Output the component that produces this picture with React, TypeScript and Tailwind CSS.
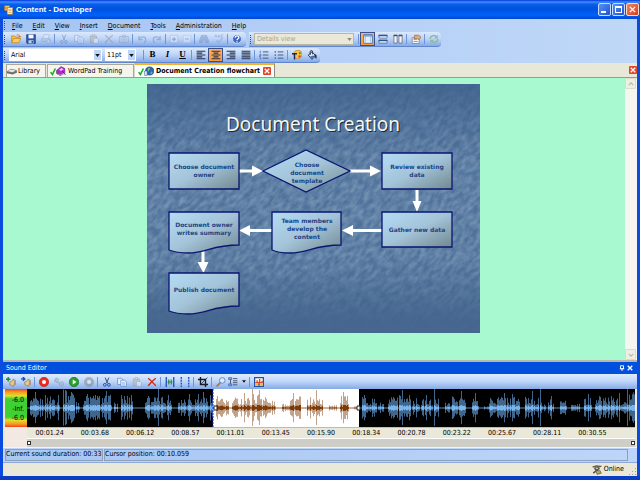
import type { ReactNode } from "react";
import { clsx } from "clsx";

type IconProps = { children: ReactNode; faded?: boolean };

const Icon = ({ children, faded }: IconProps) => (
  <svg viewBox="0 0 16 16" className={clsx("h-[10px] w-[10px] shrink-0", faded && "opacity-50")} fill="none" aria-hidden="true">
    {children}
  </svg>
);

const OpenIcon = () => (
  <Icon>
    <path d="M1 14V3h5l2 2h5v3" fill="#f6c34a" stroke="#b57a1c" />
    <path d="M1 14 4 7h12l-4 7z" fill="#ffc965" stroke="#b57a1c" />
    <path d="M9 2c3-2 5 0 5 3M12 3l2 2 2-2" stroke="#d8742a" strokeWidth="1.4" />
  </Icon>
);

const SaveIcon = () => (
  <Icon>
    <path d="M1 1h14v14H2l-1-1z" fill="#2c55a8" stroke="#173474" />
    <path d="M4 1h8v6H4z" fill="#f5f7fb" />
    <path d="M4 10h8v5H4z" fill="#c3cfe6" />
    <path d="M9 11h2v3H9z" fill="#173474" />
  </Icon>
);

const PrintIcon = () => (
  <Icon faded>
    <path d="M3 7 5 1h8l-1 6" fill="#e8effa" stroke="#7791be" />
    <path d="M1 7h13l1 5H2z" fill="#aebfdd" stroke="#7791be" />
    <circle cx="12" cy="12" r="3" fill="#c4d3ec" stroke="#7791be" />
  </Icon>
);

const CutIcon = ({ faded }: { faded?: boolean }) => (
  <Icon faded={faded}>
    <path d="M5 1 9 10M11 1 7 10" stroke={faded ? "#5d7cae" : "#34527f"} strokeWidth="1.6" />
    <circle cx="4.5" cy="12.5" r="2.2" stroke={faded ? "#5d7cae" : "#1d50b8"} strokeWidth="1.6" />
    <circle cx="11" cy="12.5" r="2.2" stroke={faded ? "#5d7cae" : "#1d50b8"} strokeWidth="1.6" />
  </Icon>
);

const CopyIcon = ({ faded }: { faded?: boolean }) => (
  <Icon faded={faded}>
    <path d="M1 2h6l3 3v7H1z" fill="#eaf2ff" stroke="#5079bd" />
    <path d="M6 5h6l3 3v7H6z" fill="#eaf2ff" stroke="#5079bd" />
    <path d="M8 9h4M8 11h5M8 13h5" stroke="#7fa0d6" />
  </Icon>
);

const PasteIcon = () => (
  <Icon faded>
    <path d="M2 3h10v11H2z" fill="#b9b3a3" stroke="#7e7c78" />
    <path d="M5 1h4v3H5z" fill="#d9d9d9" stroke="#7e7c78" />
    <path d="M7 7h6l2 2v6H7z" fill="#f2f2f2" stroke="#7e8ba5" />
  </Icon>
);

const DeleteIcon = ({ faded }: { faded?: boolean }) => (
  <Icon faded={faded}>
    <path d="M2 2c4 3 8 8 12 12M14 2C10 5 5 10 2 14" stroke={faded ? "#8b8f96" : "#d5230c"} strokeWidth="2.2" />
  </Icon>
);

const CameraIcon = () => (
  <Icon faded>
    <path d="M1 4h14v10H1z" fill="#c1cbdf" stroke="#6680ac" />
    <path d="M5 4V2h6v2" stroke="#6680ac" />
    <circle cx="8" cy="9" r="3.5" fill="#e7edf8" stroke="#6680ac" />
    <path d="M6 9h4M8 7v4" stroke="#6680ac" />
  </Icon>
);

const UndoIcon = () => (
  <Icon faded>
    <path d="M3 3v6h6M3 9c3-6 11-6 11 0 0 2-1 4-3 5" stroke="#6a8bc4" strokeWidth="2" />
  </Icon>
);

const RedoIcon = () => (
  <Icon faded>
    <path d="M13 3v6H7M13 9C10 3 2 3 2 9c0 2 1 4 3 5" stroke="#6a8bc4" strokeWidth="2" />
  </Icon>
);

const ExpandIcon = () => (
  <Icon faded>
    <path d="M2 2h12v12H2z" fill="#e4edfb" stroke="#7f9acb" />
    <path d="M5 8h6M8 5v6" stroke="#5577b3" strokeWidth="2" />
  </Icon>
);

const CollapseIcon = () => (
  <Icon faded>
    <path d="M2 2h12v12H2z" fill="#dfe9fa" stroke="#9db3da" />
    <path d="M5 8h6" stroke="#7f9acb" strokeWidth="2" />
  </Icon>
);

const FindIcon = () => (
  <Icon faded>
    <path d="M4 2h3v5h2V2h3l3 8v4h-5v-4H6v4H1v-4z" fill="#7d97c5" stroke="#5e7cb2" />
  </Icon>
);

const SpellIcon = () => (
  <Icon faded>
    <path d="M1 5 3 1l2 4M2 4h3M7 1v4h3V3H7M15 1h-3v4h3" stroke="#6583b8" />
    <path d="M4 10l3 4 7-8" stroke="#8aa2cd" strokeWidth="2.2" />
  </Icon>
);

const HelpIcon = () => (
  <Icon>
    <circle cx="8" cy="8" r="7" fill="#3a67c4" stroke="#e9f1ff" />
    <path d="M5 6c0-4 6-4 6-.5C11 8 8 7.500 8 10" stroke="#fff" strokeWidth="2" />
    <path d="M7 11.500h2v2H7z" fill="#fff" />
  </Icon>
);

const SingleViewIcon = () => (
  <Icon>
    <path d="M1 1h14v14H1z" fill="#e4effd" stroke="#4f79b8" strokeWidth="1.500" />
    <path d="M1 3h14" stroke="#5b8bd0" strokeWidth="2" />
    <path d="M4 4v10M12 4v10" stroke="#8fb1e0" strokeWidth="1.500" strokeDasharray="2 1" />
  </Icon>
);

const RowsViewIcon = () => (
  <Icon>
    <path d="M1.500 1.500h13v5h-13zM1.500 9.500h13v5h-13z" fill="#f2f7ff" stroke="#31558f" />
    <path d="M1 2.500h14M1 10.500h14" stroke="#31558f" strokeWidth="2" />
  </Icon>
);

const ColumnsViewIcon = () => (
  <Icon>
    <path d="M1.500 1.500h5v13h-5zM9.500 1.500h5v13h-5z" fill="#f2f7ff" stroke="#4a4f5c" />
    <path d="M1 2.500h6M9 2.500h6" stroke="#4a4f5c" strokeWidth="2" />
  </Icon>
);

const PropertiesIcon = () => (
  <Icon>
    <path d="M2 6h11v9H2z" fill="#fff" stroke="#51699b" />
    <path d="M4 9h6M4 12h7" stroke="#51699b" />
    <path d="M6 2h6l4 3-3 4-4-2-4 1z" fill="#e0b072" stroke="#8b5a2d" />
  </Icon>
);

const RefreshIcon = () => (
  <Icon>
    <path d="M2 8c0-6 8-7 10-3M14 8c0 6-8 7-10 3" stroke="#8fb9a9" strokeWidth="2.400" />
    <path d="M14 1v6H8zM2 15V9h6z" fill="#8fb9a9" />
  </Icon>
);

const AlignIcon = ({ lines }: { lines: string }) => (
  <Icon>
    <path d={lines} stroke="#27344f" strokeWidth="1.700" />
  </Icon>
);

const NumberListIcon = () => (
  <Icon>
    <path d="M2 1v4M1 7h2v2H1v2h2M1 13h2v2" stroke="#224f9d" />
    <path d="M6 3h9M6 8h9M6 13h9" stroke="#3c4d6f" strokeWidth="1.400" />
  </Icon>
);

const BulletListIcon = () => (
  <Icon>
    <path d="M1 2h2v2H1zM1 7h2v2H1zM1 12h2v2H1z" fill="#224f9d" />
    <path d="M6 3h9M6 8h9M6 13h9" stroke="#3c4d6f" strokeWidth="1.400" />
  </Icon>
);

const FontColorIcon = () => (
  <Icon>
    <circle cx="9.500" cy="7" r="6.500" fill="#ffc13d" stroke="#b97a21" />
    <circle cx="12.500" cy="5" r="1.800" fill="#32a843" />
    <circle cx="12" cy="10" r="1.800" fill="#ce2d29" />
    <path d="M0 6h8M4 6v9" stroke="#162b50" strokeWidth="2.200" />
  </Icon>
);

const FillIcon = () => (
  <Icon>
    <path d="M2 8 8 3l6 6-6 6z" fill="#e8edf6" stroke="#1d2a44" strokeWidth="1.400" />
    <path d="M8 9 14 9l-6 6-4-4z" fill="#4f6ea8" />
    <path d="M5 8V3c0-3 4-3 4 0v4" stroke="#1d2a44" strokeWidth="1.400" />
    <path d="M12 6c3 1 4 4 3 8-2-1-2-3-3-5z" fill="#1d2a44" />
  </Icon>
);

const SpeakerIcon = ({ minus }: { minus?: boolean }) => (
  <Icon>
    <path d="M6 8l3-1 3-4c2 3 2 8 0 12l-4-2-2-1z" fill="#e9c98c" stroke="#906b38" />
    <path d="M14 4c2 3 2 6 0 9" stroke="#906b38" />
    <path d={minus ? "M0 3h6M3 0l3 3-3 3" : "M0 3.500h7M3.500 0v7"} stroke={minus ? "#174eb5" : "#178b25"} strokeWidth="2.200" />
  </Icon>
);

const RecordIcon = () => (
  <Icon>
    <circle cx="8" cy="8" r="7.500" fill="#ee2b1a" stroke="#c41d10" />
    <circle cx="8" cy="8" r="3.200" fill="#fff" />
  </Icon>
);

const MicIcon = () => (
  <Icon faded>
    <path d="M2 3c3-3 6 0 5 3L5 9 1 7zM6 8l5 4" fill="#a7adb8" stroke="#747e90" strokeWidth="1.500" />
    <circle cx="12" cy="11" r="3.500" fill="#aab0bb" stroke="#747e90" />
  </Icon>
);

const PlayIcon = () => (
  <Icon>
    <circle cx="8" cy="8" r="7.500" fill="#26a12c" stroke="#116919" />
    <path d="M6 4v8l6-4z" fill="#fff" />
  </Icon>
);

const StopIcon = () => (
  <Icon faded>
    <circle cx="8" cy="8" r="7.500" fill="#80858d" stroke="#747e90" />
    <circle cx="8" cy="8" r="3.200" fill="#f3f6fb" />
  </Icon>
);

const SilenceIcon = () => (
  <Icon>
    <path d="M2 0v16M14 0v16" stroke="#1746c5" strokeWidth="2" />
    <path d="M4 8h8M6 4v8M10 4v8" stroke="#218a3a" strokeWidth="1.800" />
  </Icon>
);

const MarkersIcon = () => (
  <Icon>
    <path d="M2 0v16M14 0v16" stroke="#1746c5" strokeWidth="2" strokeDasharray="3 1.500" />
  </Icon>
);

const CropIcon = () => (
  <Icon>
    <path d="M4 0v12h12M0 4h12v12" stroke="#181c25" strokeWidth="2.200" />
    <path d="M5 11 15 1" stroke="#181c25" strokeWidth="1.200" />
  </Icon>
);

const ZoomIcon = () => (
  <Icon>
    <path d="M7 9 1 15" stroke="#c6702b" strokeWidth="3" />
    <circle cx="10" cy="5.500" r="4.500" fill="#d6ebff" stroke="#6985b5" strokeWidth="1.500" />
  </Icon>
);

const TreeIcon = () => (
  <Icon>
    <path d="M1 1h5v3H1zM1 11h5v3H1z" fill="#77a9ed" stroke="#2a5db0" />
    <path d="M8 2.500h7M8 6h7M8 9h7M8 12.500h7M4 4v7" stroke="#4b5568" strokeWidth="1.500" />
  </Icon>
);

const LevelsIcon = () => (
  <Icon>
    <path d="M1 1h14v14H1z" fill="#fff6e5" stroke="#2353a3" strokeWidth="2" />
    <path d="M2 10V8h2V5h2v3h2V3h2v5h2V6h2v4z" fill="#e0432a" />
    <path d="M2 10h12v4H2z" fill="#f6b83c" />
    <path d="M7 10h2v4H7z" fill="#2353a3" />
  </Icon>
);

const DriveIcon = () => (
  <Icon>
    <path d="M0 9 6 5l9 2 1 3-7 3-9-2z" fill="#6f7278" stroke="#53565c" strokeWidth="0.800" />
    <path d="M1 8.500 6 5.500l8 1.500-5 3z" fill="#e6e6e6" />
  </Icon>
);

const CheckIcon = () => (
  <svg viewBox="0 0 10 14" className="h-[9px] w-[6px]" fill="none" aria-hidden="true">
    <path d="M1 8l3 4L9 2" stroke="#15b01c" strokeWidth="2.600" />
  </svg>
);

const BookIcon = () => (
  <Icon>
    <path d="M1 7 8 1l6 3v7l-7 4-6-3z" fill="#b12bc9" stroke="#5f1878" />
    <path d="M5 6l4-3 3 2-4 3z" fill="#f3cdf8" />
    <path d="M2 12l5 2 7-4v2l-7 3-5-2z" fill="#fff" stroke="#5f1878" strokeWidth="0.500" />
    <path d="M10 8l5 6" stroke="#28386f" strokeWidth="1.600" />
  </Icon>
);

const GlobeIcon = () => (
  <Icon>
    <circle cx="9" cy="8" r="6.500" fill="#2a62bd" stroke="#12346f" />
    <path d="M6 4c3-3 5 0 3 2s0 3-3 2zM11 9c3-1 3 1 2 3l-3 1z" fill="#6cc077" />
    <path d="M1 8h4v7H1z" fill="#e9f2ff" stroke="#426399" />
  </Icon>
);

const AppIcon = () => (
  <Icon>
    <path d="M1 1h8v8H1z" fill="#f5d987" stroke="#93651f" />
    <path d="M5 4h9v11H5z" fill="#fff5d3" stroke="#93651f" />
    <path d="M7 7h5M7 9h5M7 12h5" stroke="#d98f28" />
    <path d="M1 3h5v4H1z" fill="#e6902b" />
  </Icon>
);

const OnlineIcon = () => (
  <Icon>
    <path d="M1 3l9 1 5-2-8-1z" fill="#77756f" stroke="#3c3c39" />
    <path d="M2 13l10-8M4 5l9 9" stroke="#57544b" strokeWidth="2.500" />
    <path d="M6 9h7l2 4-7 2z" fill="#c5a44d" stroke="#57544b" />
  </Icon>
);

const Grip = () => (
  <span className="mx-px flex h-full w-[3px] flex-col justify-center gap-px" aria-hidden="true">
    <span className="h-px w-px bg-[#1f4d9f]" />
    <span className="h-px w-px bg-[#1f4d9f]" />
    <span className="h-px w-px bg-[#1f4d9f]" />
    <span className="h-px w-px bg-[#1f4d9f]" />
    <span className="h-px w-px bg-[#1f4d9f]" />
  </span>
);

const Separator = () => <span className="mx-px h-[10px] w-px shrink-0 bg-[#6c94d6]" aria-hidden="true" />;

type ToolButtonProps = { label: string; children: ReactNode; active?: boolean; narrow?: boolean; disabled?: boolean };

const ToolButton = ({ label, children, active, narrow, disabled }: ToolButtonProps) => (
  <button
    type="button"
    aria-label={label}
    disabled={disabled}
    className={clsx(
      "flex h-[14px] shrink-0 items-center justify-center",
      narrow ? "w-[13px]" : "w-[15px]",
      active && "border border-[#3d4f86] bg-gradient-to-b from-[#ffb062] to-[#f79a3c]"
    )}
  >
    {children}
  </button>
);

const toolbarClass =
  "flex h-[15px] items-center rounded-r-sm border-b border-[#5f87cf] bg-gradient-to-b from-[#dce9fd] via-[#bcd3f7] to-[#86aae6]";

type ToolbarSelectProps = { label: string; value: string; disabled?: boolean; className: string };

const ToolbarSelect = ({ label, value, disabled, className }: ToolbarSelectProps) => (
  <div className={clsx("relative h-[12px] shrink-0", className)}>
    <select
      aria-label={label}
      defaultValue={value}
      disabled={disabled}
      className={clsx(
        "block h-full w-full appearance-none px-[2px] text-[7px] leading-[10px] opacity-100",
        disabled ? "border border-[#b9b7a3] bg-[#e9e8d9] text-[#a4a294]" : "bg-white text-black"
      )}
    >
      <option>{value}</option>
    </select>
    <span
      className={clsx(
        "pointer-events-none absolute inset-y-px right-px flex w-[7px] items-center justify-center",
        !disabled && "bg-[#bfd5f8]"
      )}
    >
      <svg viewBox="0 0 6 4" className="h-[3px] w-[5px]" aria-hidden="true">
        <path d="M0 0h6L3 4z" fill={disabled ? "#8c8a7c" : "#111"} />
      </svg>
    </span>
  </div>
);

const TitleBar = () => (
  <header className="flex h-[19px] shrink-0 items-center bg-[linear-gradient(to_bottom,#0831d9_0,#3a93ff_2px,#0a5fee_4px,#0050dd_9px,#0062fb_15px,#0046d0_19px)] pr-px pl-[4px]">
    <AppIcon />
    <h1 className="ml-[2px] flex-1 font-['Liberation_Sans',sans-serif] text-[8px] leading-[12px] font-bold text-white">
      Content - Developer
    </h1>
    <div className="flex gap-px">
      <button type="button" aria-label="Minimize" className="flex h-[13px] w-[13px] rounded-[2px] border border-[#c7dcff] bg-gradient-to-br from-[#5a92f5] to-[#1e50d3]">
        <span className="mt-[7px] ml-[2px] h-[2px] w-[5px] bg-white" />
      </button>
      <button type="button" aria-label="Maximize" className="flex h-[13px] w-[13px] items-center justify-center rounded-[2px] border border-[#c7dcff] bg-gradient-to-br from-[#5a92f5] to-[#1e50d3]">
        <span className="h-[7px] w-[7px] border border-t-2 border-white" />
      </button>
      <button type="button" aria-label="Close" className="flex h-[13px] w-[13px] items-center justify-center rounded-[2px] border border-[#ffd9cc] bg-gradient-to-br from-[#f08563] to-[#d33a10]">
        <svg viewBox="0 0 8 8" className="h-[7px] w-[7px]" aria-hidden="true">
          <path d="M1 1l6 6M7 1 1 7" stroke="#fff" strokeWidth="1.500" />
        </svg>
      </button>
    </div>
  </header>
);

const menuItems = ["File", "Edit", "View", "Insert", "Document", "Tools", "Administration", "Help"];

const MenuBar = () => (
  <nav className="flex h-[13px] items-center">
    <Grip />
    <div className="ml-[4px] flex gap-[10px]">
      {menuItems.map((item) => (
        <button key={item} type="button" className="text-[7px] leading-[10px]">
          <span className="underline">{item[0]}</span>
          {item.slice(1)}
        </button>
      ))}
    </div>
  </nav>
);

const StandardToolbar = () => (
  <div className="flex">
    <div className={clsx(toolbarClass, "pr-[2px]")}>
      <Grip />
      <ToolButton label="Open"><OpenIcon /></ToolButton>
      <ToolButton label="Save"><SaveIcon /></ToolButton>
      <ToolButton label="Print" disabled><PrintIcon /></ToolButton>
      <Separator />
      <ToolButton label="Cut" disabled><CutIcon faded /></ToolButton>
      <ToolButton label="Copy" disabled><CopyIcon faded /></ToolButton>
      <ToolButton label="Paste" disabled><PasteIcon /></ToolButton>
      <ToolButton label="Delete" disabled><DeleteIcon faded /></ToolButton>
      <ToolButton label="Capture" disabled><CameraIcon /></ToolButton>
      <Separator />
      <ToolButton label="Undo" disabled><UndoIcon /></ToolButton>
      <ToolButton label="Redo" disabled><RedoIcon /></ToolButton>
      <Separator />
      <ToolButton label="Expand" narrow disabled><ExpandIcon /></ToolButton>
      <ToolButton label="Collapse" narrow disabled><CollapseIcon /></ToolButton>
      <Separator />
      <ToolButton label="Find" disabled><FindIcon /></ToolButton>
      <ToolButton label="Check spelling" disabled><SpellIcon /></ToolButton>
      <Separator />
      <ToolButton label="Help"><HelpIcon /></ToolButton>
    </div>
    <div className={clsx(toolbarClass, "ml-[3px]")}>
      <Grip />
      <ToolbarSelect label="View" value="Details view" disabled className="w-[100px]" />
      <span className="w-[3px]" />
      <Separator />
      <ToolButton label="Single pane" active><SingleViewIcon /></ToolButton>
      <ToolButton label="Split rows"><RowsViewIcon /></ToolButton>
      <ToolButton label="Split columns"><ColumnsViewIcon /></ToolButton>
      <Separator />
      <ToolButton label="Properties"><PropertiesIcon /></ToolButton>
      <Separator />
      <ToolButton label="Refresh"><RefreshIcon /></ToolButton>
    </div>
  </div>
);

const FormatToolbar = () => (
  <div className="flex pt-px">
    <div className={clsx(toolbarClass, "pr-px")}>
      <Grip />
      <ToolbarSelect label="Font" value="Arial" className="mx-px w-[93px]" />
      <ToolbarSelect label="Font size" value="11pt" className="ml-[2px] w-[31px]" />
      <span className="w-[6px]" />
      <Separator />
      <ToolButton label="Bold"><b className="font-['Liberation_Serif',serif] text-[9px]">B</b></ToolButton>
      <ToolButton label="Italic"><i className="font-['Liberation_Serif',serif] text-[9px] font-bold">I</i></ToolButton>
      <ToolButton label="Underline"><u className="font-['Liberation_Serif',serif] text-[9px] font-bold">U</u></ToolButton>
      <Separator />
      <ToolButton label="Align left"><AlignIcon lines="M1 2h14M1 5h9M1 8h14M1 11h9M1 14h14" /></ToolButton>
      <ToolButton label="Align center" active><AlignIcon lines="M1 2h14M4 5h8M1 8h14M4 11h8M1 14h14" /></ToolButton>
      <ToolButton label="Align right"><AlignIcon lines="M1 2h14M6 5h9M1 8h14M6 11h9M1 14h14" /></ToolButton>
      <ToolButton label="Justify"><AlignIcon lines="M1 2h14M1 5h14M1 8h14M1 11h14M1 14h14" /></ToolButton>
      <Separator />
      <ToolButton label="Numbered list"><NumberListIcon /></ToolButton>
      <ToolButton label="Bulleted list"><BulletListIcon /></ToolButton>
      <Separator />
      <ToolButton label="Font color"><FontColorIcon /></ToolButton>
      <ToolButton label="Fill color"><FillIcon /></ToolButton>
    </div>
  </div>
);

const CloseTabButton = ({ label }: { label: string }) => (
  <button type="button" aria-label={label} className="flex h-[8px] w-[8px] shrink-0 items-center justify-center rounded-[1px] bg-[#e4442a]">
    <svg viewBox="0 0 8 8" className="h-[6px] w-[6px]" aria-hidden="true">
      <path d="M1 1l6 6M7 1 1 7" stroke="#fff" strokeWidth="1.600" />
    </svg>
  </button>
);

const DocumentTabs = () => (
  <div className="flex h-[15px] items-end border-b border-[#9b9b8f] bg-[#e8e8d9] pl-[3px]">
    <button type="button" className="flex h-[13px] w-[40px] items-center gap-px border border-b-0 border-[#aaa998] bg-[#f5f5ee] text-[7px]">
      <DriveIcon />
      Library
    </button>
    <button type="button" className="ml-px flex h-[13px] w-[87px] items-center border border-b-0 border-[#aaa998] bg-[#f5f5ee] pl-[2px] text-[7px]">
      <CheckIcon />
      <BookIcon />
      <span className="ml-[2px]">WordPad Training</span>
    </button>
    <div className="flex h-[14px] w-[141px] items-center border-t-2 border-r border-l border-t-[#f5b32d] border-r-[#8d8c80] border-l-[#d8d7c9] bg-white pl-[3px]">
      <button type="button" className="flex items-center text-[7px] font-bold whitespace-nowrap">
        <CheckIcon />
        <GlobeIcon />
        <span className="ml-[2px]">Document Creation flowchart</span>
      </button>
      <span className="ml-[3px] flex">
        <CloseTabButton label="Close tab" />
      </span>
    </div>
    <div className="flex h-full flex-1 items-center justify-end">
      <CloseTabButton label="Close document" />
    </div>
  </div>
);

type FlowNode = { shape: string; lines: string[]; x: number; y: number };

const flowNodes: FlowNode[] = [
  { shape: "M22 69h70v36H22z", lines: ["Choose document", "owner"], x: 57, y: 85 },
  { shape: "M116 87 159 66l44 21-44 21z", lines: ["Choose", "document", "template"], x: 160, y: 83 },
  { shape: "M235 69h70v36h-70z", lines: ["Review existing", "data"], x: 270, y: 85 },
  { shape: "M235 128h70v35h-70z", lines: ["Gather new data"], x: 270, y: 148 },
  { shape: "M125 128h69v33c-28 0-32 8-51 8-9 0-14-1-18-3z", lines: ["Team members", "develop the", "content"], x: 160, y: 139 },
  { shape: "M22 128h70v33c-28 0-32 8-51 8-9 0-14-1-19-3z", lines: ["Document owner", "writes summary"], x: 57, y: 143 },
  { shape: "M22 189h70v33c-28 0-32 8-51 8-9 0-14-1-19-3z", lines: ["Publish document"], x: 57, y: 208 },
];

const arrows = [
  "M92 85.500h13v-4l11 5.500-11 5.500v-4H92z",
  "M203 85.500h20v-4l11 5.500-11 5.500v-4h-20z",
  "M268.500 106v11h-3l4.500 11 4.500-11h-3v-11z",
  "M235 145h-29v-4l-11 5.500 11 5.500v-4h29z",
  "M125 145h-22v-4l-11 5.500 11 5.500v-4h22z",
  "M54.500 167v11h-4l6 11 5-11h-4v-11z",
];

const Slide = () => (
  <svg viewBox="0 0 333 249" className="h-[249px] w-[333px] shrink-0" role="img" aria-label="Document Creation flowchart">
    <defs>
      <linearGradient id="slide-bg" x1="0" y1="0" x2="0" y2="1">
        <stop offset="0" stopColor="#41648f" />
        <stop offset="0.350" stopColor="#4f729b" />
        <stop offset="0.700" stopColor="#4f729b" />
        <stop offset="0.900" stopColor="#45678f" />
        <stop offset="1" stopColor="#45668f" />
      </linearGradient>
      <linearGradient id="texture-fade" x1="0" y1="0" x2="0" y2="1">
        <stop offset="0" stopColor="#222" />
        <stop offset="0.300" stopColor="#fff" />
        <stop offset="0.700" stopColor="#fff" />
        <stop offset="0.950" stopColor="#111" />
      </linearGradient>
      <mask id="texture-mask">
        <rect width="333" height="249" fill="url(#texture-fade)" />
      </mask>
      <linearGradient id="node-fill" x1="0" y1="0" x2="1" y2="1">
        <stop offset="0" stopColor="#b4dcf5" />
        <stop offset="0.500" stopColor="#a3c3d8" />
        <stop offset="1" stopColor="#71888f" />
      </linearGradient>
      <filter id="stone" x="0" y="0" width="100%" height="100%">
        <feTurbulence type="fractalNoise" baseFrequency="0.120 0.240" numOctaves="4" seed="8" />
        <feColorMatrix values="0 0 0 0 0.580  0 0 0 0 0.700  0 0 0 0 0.800  0.600 0 0 0 -0.160" />
      </filter>
    </defs>
    <rect width="333" height="249" fill="url(#slide-bg)" />
    <g mask="url(#texture-mask)">
      <rect x="-60" y="-100" width="460" height="450" transform="rotate(-45 166 124)" filter="url(#stone)" />
    </g>
    <g className="font-['Noto_Sans','Open_Sans',sans-serif] text-[19px]" textAnchor="middle">
      <text x="167" y="48" fill="#1d2733">Document Creation</text>
      <text x="166" y="47" fill="#f7f7ef" aria-hidden="true">Document Creation</text>
    </g>
    {arrows.map((d) => (
      <path key={d} d={d} fill="#fff" />
    ))}
    {flowNodes.map((node) => (
      <g key={node.shape}>
        <path d={node.shape} fill="url(#node-fill)" stroke="#0a1670" strokeWidth="1.300" />
        <text textAnchor="middle" fill="#1d4585" className="font-['DejaVu_Sans',sans-serif] text-[6px] font-bold">
          {node.lines.map((line, i) => (
            <tspan key={line} x={node.x} y={node.y + i * 8}>
              {line}
            </tspan>
          ))}
        </text>
      </g>
    ))}
  </svg>
);

const Workspace = () => (
  <main className="flex min-h-0 flex-1 bg-[#a9f9d0]">
    <div className="flex min-w-0 flex-1 justify-center pt-[6px] pr-[2px]">
      <Slide />
    </div>
    <div className="flex w-[12px] flex-col justify-between bg-[#f6f5f0] pr-px" aria-hidden="true">
      {["M1 4 4 1l3 3", "M1 1l3 3 3-3"].map((d) => (
        <span key={d} className="flex h-[11px] items-center justify-center rounded-[1px] border border-[#dcdacb] bg-[#efeee3]">
          <svg viewBox="0 0 8 5" className="h-[4px] w-[6px]" fill="none">
            <path d={d} stroke="#b9b8a8" strokeWidth="1.500" />
          </svg>
        </span>
      ))}
    </div>
  </main>
);

const WAVE_WIDTH = 608;
const SELECTION = { from: 186, to: 332 };

// start, end and loudness of every spoken burst
const bursts = [
  [3, 17, 9], [16, 32, 12], [36, 47, 17], [49, 52, 8], [56, 84, 12], [87, 90, 5], [94, 105, 12], [118, 130, 11],
  [131, 144, 11], [151, 185, 10], [189, 201, 9], [205, 224, 10], [224, 239, 14], [240, 248, 7], [255, 262, 6],
  [263, 273, 11], [280, 295, 10], [302, 309, 4], [313, 321, 11], [327, 331, 2], [335, 342, 12], [343, 349, 9],
  [351, 356, 5], [361, 370, 10], [372, 383, 12], [385, 392, 9], [394, 405, 8], [407, 411, 9], [418, 423, 5],
  [424, 438, 11], [445, 451, 9], [457, 461, 2], [461, 492, 11], [498, 511, 11], [513, 518, 5], [521, 526, 8],
  [533, 539, 8], [544, 552, 4], [557, 564, 9], [568, 600, 11], [600, 608, 17],
];

const peaks = [
  [8, 16], [18, 13], [31, 13], [38, 18], [44, 16], [60, 14], [68, 13], [79, 17], [97, 12], [104, 13], [121, 12],
  [131, 19], [141, 13], [162, 14], [171, 14], [176, 16], [183, 13], [190, 12], [217, 15], [225, 19], [232, 18],
  [266, 15], [289, 18], [316, 16], [337, 13], [375, 18], [382, 13], [399, 13], [407, 19], [434, 17], [448, 15],
  [477, 15], [485, 14], [505, 17], [513, 19], [524, 12], [561, 14], [592, 15], [600, 19],
];

const noise = (x: number) => {
  const n = Math.sin(x * 127.1 + 311.7) * 43758.5453;
  return n - Math.floor(n);
};

const amplitudeAt = (x: number) => {
  const peak = peaks.find((p) => p[0] === x);
  if (peak) return peak[1];
  const burst = bursts.find((b) => x >= b[0] && x <= b[1]);
  return burst ? burst[2] * (0.2 + 0.9 * noise(x)) : 0;
};

const wavePath = (from: number, to: number, scale: number, limit: number) => {
  let d = "";
  for (let x = from; x < to; x++) {
    const a = Math.min(amplitudeAt(x) * scale, limit);
    if (a > 0) d += `M${x + 0.5} ${(19 - a).toFixed(1)}V${(19 + a * 0.95).toFixed(1)}`;
  }
  return d;
};

const waveParts = [
  { from: 0, to: SELECTION.from, outer: "#41668c", inner: "#7ab5ee" },
  { from: SELECTION.from, to: SELECTION.to, outer: "#c3a28a", inner: "#7c3a08" },
  { from: SELECTION.to, to: WAVE_WIDTH, outer: "#41668c", inner: "#7ab5ee" },
];

const Waveform = () => (
  <svg viewBox="0 0 608 38" preserveAspectRatio="none" className="block h-[38px] w-full bg-black" role="img" aria-label="Waveform">
    <rect x={SELECTION.from} width={SELECTION.to - SELECTION.from} height="38" fill="#fff" />
    {waveParts.map((part) => (
      <g key={part.from}>
        <path d={`M${part.from} 19H${part.to}`} stroke={part.inner} strokeWidth="0.800" />
        <path d={wavePath(part.from, part.to, 1, 19)} stroke={part.outer} />
        <path d={wavePath(part.from, part.to, 0.26, 3)} stroke={part.inner} />
      </g>
    ))}
    <path d="M186 0v38" stroke="#1c35d8" strokeDasharray="2 1" />
    <path d="M187 17h3v4h-3zM330 17h3v4h-3z" fill="#fff" stroke="#222" />
  </svg>
);

const times = [
  "00:01.24", "00:03.68", "00:06.12", "00:08.57", "00:11.01", "00:13.45", "00:15.90",
  "00:18.34", "00:20.78", "00:23.22", "00:25.67", "00:28.11", "00:30.55",
];

const SoundEditor = () => (
  <section className="shrink-0 border-t-2 border-[#b8b8ac] bg-[#ece9d8]">
    <div className="flex h-[12px] items-center bg-[#0050dd] px-[3px] text-white">
      <h2 className="flex-1 text-[7px] leading-[10px]">Sound Editor</h2>
      <button type="button" aria-label="Pin panel" className="flex w-[9px] justify-center">
        <svg viewBox="0 0 8 8" className="h-[6px] w-[6px]" fill="none" aria-hidden="true">
          <path d="M2 1h4v4H2zM1 5h6M4 5v3" stroke="#fff" strokeWidth="1.200" />
        </svg>
      </button>
      <button type="button" aria-label="Close panel" className="flex w-[8px] justify-center">
        <svg viewBox="0 0 8 8" className="h-[6px] w-[6px]" aria-hidden="true">
          <path d="M1 1l6 6M7 1 1 7" stroke="#fff" strokeWidth="1.800" />
        </svg>
      </button>
    </div>
    <div className="flex h-[15px] items-center bg-gradient-to-b from-[#e0ecfe] via-[#bed5f8] to-[#86aae6]">
      <ToolButton label="Add sound"><SpeakerIcon /></ToolButton>
      <ToolButton label="Insert sound"><SpeakerIcon minus /></ToolButton>
      <Separator />
      <ToolButton label="Record"><RecordIcon /></ToolButton>
      <ToolButton label="Record over" disabled><MicIcon /></ToolButton>
      <ToolButton label="Play"><PlayIcon /></ToolButton>
      <ToolButton label="Stop" disabled><StopIcon /></ToolButton>
      <Separator />
      <ToolButton label="Cut sound"><CutIcon /></ToolButton>
      <ToolButton label="Copy sound"><CopyIcon /></ToolButton>
      <ToolButton label="Paste sound" disabled><PasteIcon /></ToolButton>
      <ToolButton label="Delete sound"><DeleteIcon /></ToolButton>
      <Separator />
      <ToolButton label="Insert silence"><SilenceIcon /></ToolButton>
      <ToolButton label="Select all"><MarkersIcon /></ToolButton>
      <Separator />
      <ToolButton label="Crop"><CropIcon /></ToolButton>
      <Separator />
      <ToolButton label="Zoom"><ZoomIcon /></ToolButton>
      <button type="button" aria-label="Levels menu" className="flex w-[20px] items-center gap-[4px]">
        <TreeIcon />
        <svg viewBox="0 0 6 4" className="h-[3px] w-[4px] shrink-0" aria-hidden="true">
          <path d="M0 0h6L3 4z" fill="#111" />
        </svg>
      </button>
      <Separator />
      <ToolButton label="Effects"><LevelsIcon /></ToolButton>
    </div>
    <div className="flex pr-[2px] pl-[2px]">
      <div className="w-[22px] shrink-0 bg-[#f1e9e2]">
        <div className="flex h-[38px] flex-col items-end justify-center bg-[linear-gradient(to_bottom,#f4411e_0%,#f59a23_8%,#e0e02a_18%,#3fd033_26%,#3fd033_74%,#e0e02a_82%,#f59a23_92%,#f4411e_100%)] pt-[2px] pr-[3px] text-[7px] leading-[9px]">
          <span>-6.0</span>
          <span>-Inf.</span>
          <span>-6.0</span>
        </div>
      </div>
      <div className="min-w-0 flex-1">
        <Waveform />
        <div className="flex h-[11px] items-center border-t border-[#bdbcae] bg-[#e9e8d9] pr-[20px] text-[7px] leading-[9px]">
          {times.map((time) => (
            <span key={time} className="flex-1 text-center">{time}</span>
          ))}
        </div>
        <div className="flex h-[9px] items-center justify-between border-t border-white bg-[#cfcec6]">
          <span className="h-[4px] w-[4px] border border-[#333] bg-white" />
          <span className="h-[4px] w-[4px] border border-[#333] bg-white" />
        </div>
      </div>
    </div>
    <div className="flex h-[15px] items-center border-t border-[#f6f6f0] bg-[#bcd5f8] px-[2px] text-[7px] leading-[9px]">
      <span className="h-[12px] w-[98px] border border-[#8f9fb8] bg-[#a9c8f4] whitespace-nowrap">Current sound duration: 00:33</span>
      <span className="ml-px h-[12px] flex-1 border border-[#8f9fb8] bg-gradient-to-r from-[#a9c8f4] to-[#bdd5f8]">Cursor position: 00:10.059</span>
      <span className="w-[7px]" />
    </div>
  </section>
);

const StatusBar = () => (
  <footer className="flex h-[14px] shrink-0 items-center justify-end gap-[2px] border-t border-[#8ba9dc] bg-[#e9e8d9] text-[7px]">
    <OnlineIcon />
    <span>Online</span>
    <svg viewBox="0 0 8 8" className="ml-[3px] h-[8px] w-[8px] self-end" aria-hidden="true">
      <path d="M6 0h1v1H6zM6 3h1v1H6zM3 3h1v1H3zM6 6h1v1H6zM3 6h1v1H3zM0 6h1v1H0z" fill="#a5a493" />
    </svg>
  </footer>
);

const App = () => (
  <div className="flex h-screen min-h-[360px] flex-col overflow-hidden bg-[#0a4be0] font-['DejaVu_Sans_Condensed','Noto_Sans',sans-serif] text-black">
    <TitleBar />
    <div className="mr-[3px] ml-[3px] flex min-h-0 flex-1 flex-col bg-[#e9e8d9]">
      <div className="shrink-0 bg-gradient-to-r from-[#a3c4f2] via-[#b5cff7] to-[#bfd8f7]">
        <MenuBar />
        <StandardToolbar />
        <FormatToolbar />
      </div>
      <DocumentTabs />
      <Workspace />
      <SoundEditor />
      <StatusBar />
    </div>
    <div className="h-[4px] shrink-0 bg-[#0a3cc4]" />
  </div>
);

export default App;
